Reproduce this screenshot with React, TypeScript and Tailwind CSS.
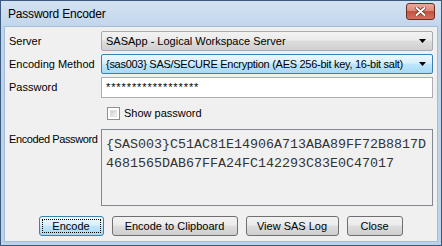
import React from "react";

const Arrow = () => (
  <svg width="7" height="4" viewBox="0 0 7 4" className="block shrink-0">
    <path d="M0 0H7L3.5 4Z" fill="#000" />
  </svg>
);

function Combo({ text, focused }: { text: string; focused?: boolean }) {
  return (
    <div
      className={
        "h-[20px] flex items-center justify-between pl-[4px] pr-[6px] rounded-[2px] border " +
        (focused
          ? "border-[#3c7fb1] bg-[linear-gradient(#eaf6fd_0%,#d9f0fc_45%,#bee6fd_50%,#a7d9f5_100%)]"
          : "border-[#a7abb0] bg-[linear-gradient(#f2f2f2_0%,#ebebeb_45%,#dddddd_50%,#cfcfcf_100%)]")
      }
    >
      <span className={"whitespace-nowrap text-black " + (focused ? "tracking-[-0.28px]" : "")}>{text}</span>
      <Arrow />
    </div>
  );
}

function Btn({ label, w, def }: { label: string; w: string; def?: boolean }) {
  return (
    <div
      className={
        "h-[20px] rounded-[3px] border flex items-center justify-center relative " +
        w +
        " " +
        (def
          ? "border-[#3c7fb1] bg-[linear-gradient(#eaf6fd_0%,#d9f0fc_45%,#bee6fd_50%,#a7d9f5_100%)]"
          : "border-[#707070] bg-[linear-gradient(#f2f2f2_0%,#ebebeb_45%,#dddddd_50%,#cfcfcf_100%)]")
      }
    >
      {def && (
        <div className="absolute inset-[2px] border border-dotted border-black" />
      )}
      <span className="text-black whitespace-nowrap">{label}</span>
    </div>
  );
}

export default function App() {
  return (
    <div
      className="w-[442px] h-[246px] flex flex-col border border-[#3c5a7e] bg-[linear-gradient(#d3e2f2_0%,#bfd4ea_12%,#bcd2e9_100%)] text-[11px] leading-none"
      style={{ fontFamily: '"Liberation Sans", Arial, sans-serif' }}
    >
      <div className="h-[25px] flex items-center justify-between pl-[7px] pr-[6px]">
        <span className="text-[12px] text-black tracking-[-0.2px] mt-[1px]">Password Encoder</span>
        <div className="w-[29px] h-[17px] mt-[-5px] rounded-[3px] border border-[#6d2b22] bg-[linear-gradient(#e9a99c_0%,#d98b7b_45%,#c5523e_50%,#d0735c_100%)] flex items-center justify-center">
          <svg width="11" height="9" viewBox="0 0 11 9">
            <path
              d="M1.5 1L9.5 8M9.5 1L1.5 8"
              stroke="#5a2a22"
              strokeWidth="3.4"
              strokeLinecap="round"
            />
            <path
              d="M1.5 1L9.5 8M9.5 1L1.5 8"
              stroke="#ffffff"
              strokeWidth="2"
              strokeLinecap="round"
            />
          </svg>
        </div>
      </div>
      <div className="flex-1 mx-[3px] mb-[3px] bg-[#f0f0f0] border border-[#a3bcd8] flex flex-col pl-[3px] pr-[4px] pt-[4px]">
        <div className="grid grid-cols-[93px_1fr] gap-y-[3px] items-center">
          <span className="pl-[1px]">Server</span>
          <Combo text="SASApp - Logical Workspace Server" />
          <span className="pl-[1px]">Encoding Method</span>
          <Combo text="{sas003} SAS/SECURE Encryption (AES 256-bit key, 16-bit salt)" focused />
          <span className="pl-[1px]">Password</span>
          <div className="h-[21px] bg-white border border-[#abadb3] flex items-center pl-[4px]">
            <span className="tracking-[0.9px]">******************</span>
          </div>
        </div>
        <div className="grid grid-cols-[93px_1fr] mt-[9px]">
          <span />
          <div className="flex items-center pl-[6px] h-[13px]">
            <div className="w-[13px] h-[13px] border border-[#8e8f8f] bg-white p-[2px]">
              <div className="w-full h-full border border-[#e0e0e0] bg-[linear-gradient(135deg,#cbcbcb,#f6f6f6)]" />
            </div>
            <span className="ml-[4px]">Show password</span>
          </div>
        </div>
        <div className="grid grid-cols-[93px_1fr] mt-[9px]">
          <span className="pl-[1px] pt-[5px] tracking-[-0.4px]">Encoded Password</span>
          <div
            className="h-[77px] border border-[#828790] pl-[4px] pt-[5px] text-[13.33px] leading-[19px] text-[#333]"
            style={{ fontFamily: '"Liberation Mono", "Courier New", monospace' }}
          >
            <div>{"{SAS003}C51AC81E14906A713ABA89FF72B8817D"}</div>
            <div>4681565DAB67FFA24FC142293C83E0C47017</div>
          </div>
        </div>
        <div className="flex justify-center gap-[8px] mt-[10px]">
          <Btn label="Encode" w="w-[65px]" def />
          <Btn label="Encode to Clipboard" w="w-[126px]" />
          <Btn label="View SAS Log" w="w-[93px]" />
          <Btn label="Close" w="w-[56px]" />
        </div>
      </div>
    </div>
  );
}
